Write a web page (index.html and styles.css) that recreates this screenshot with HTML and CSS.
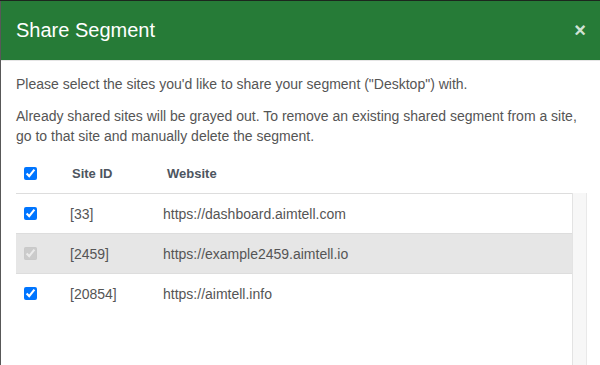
FILE: index.html
```html
<!DOCTYPE html>
<html lang="en">
<head>
  <meta charset="UTF-8" />
  <meta name="viewport" content="width=device-width, initial-scale=1.0"/>
  <title>Share Segment</title>
  <link rel="stylesheet" href="styles.css">
</head>
<body>
  <div class="modal">
    <div class="modal-header">
      <h4>Share Segment</h4>
      <button type="button" class="close">&times;</button>
    </div>
    <div class="modal-body">
      <p>Please select the sites you'd like to share your segment ("Desktop") with.</p>
      <p>Already shared sites will be grayed out. To remove an existing shared segment from a site, go to that site and manually delete the segment.</p>

      <div class="sites">
        <div class="row head">
          <div class="cell check"><input type="checkbox" checked></div>
          <div class="cell id">Site ID</div>
          <div class="cell url">Website</div>
        </div>
        <div class="scroll">
          <div class="list">
            <div class="row">
              <div class="cell check"><input type="checkbox" checked></div>
              <div class="cell id">[33]</div>
              <div class="cell url">https://dashboard.aimtell.com</div>
            </div>
            <div class="row shared">
              <div class="cell check"><input type="checkbox" checked disabled></div>
              <div class="cell id">[2459]</div>
              <div class="cell url">https://example2459.aimtell.io</div>
            </div>
            <div class="row">
              <div class="cell check"><input type="checkbox" checked></div>
              <div class="cell id">[20854]</div>
              <div class="cell url">https://aimtell.info</div>
            </div>
          </div>
          <div class="track"></div>
        </div>
      </div>
    </div>
  </div>
</body>
</html>
```

FILE: styles.css
```css
body {
  margin: 0;
  font-family: 'Liberation Sans', Arial, sans-serif;
  background: #585858;
  border-top: 1px solid #1c261e;
  overflow: hidden;
}

.modal {
  margin-left: 1px;
  background: #fff;
  height: 364px;
  overflow: hidden;
}

.modal-header {
  background: #267b37;
  height: 59px;
  border-bottom: 1px solid #e5e5e5;
  display: flex;
  align-items: center;
  justify-content: space-between;
  padding: 0 14px 0 15px;
}

.modal-header h4 {
  margin: 0;
  color: #fff;
  font-size: 20px;
  font-weight: normal;
}

.close {
  background: none;
  border: none;
  padding: 0;
  color: rgba(255, 255, 255, 0.8);
  font-family: 'Liberation Sans', Arial, sans-serif;
  font-size: 20px;
  font-weight: bold;
  line-height: 1;
  margin-top: -2px;
}

.modal-body {
  padding: 13px 13px 0 15px;
  color: #555;
  font-size: 14px;
}

.modal-body p {
  margin: 0 0 12px;
  line-height: 20px;
}

.modal-body p + p {
  margin-bottom: 7px;
}

.row {
  display: flex;
  align-items: center;
  height: 39px;
  border-top: 1px solid #ddd;
}

.row.head {
  border-top: none;
  height: 40px;
  padding-top: 1px;
  box-sizing: border-box;
  font-weight: bold;
  color: #4d5560;
  font-size: 13px;
}

.row.shared {
  background: #e6e6e6;
  border-bottom: 1px solid #ddd;
}

.row.shared + .row {
  border-top: none;
}

.cell.check {
  width: 54px;
  padding-left: 8px;
  box-sizing: border-box;
}

.cell.check input {
  margin: 0;
  width: 13px;
  height: 13px;
  display: block;
}

.cell.id {
  width: 93px;
}

.row.head .cell.id {
  width: 95px;
  padding-left: 2px;
}

.scroll {
  display: flex;
  height: 200px;
}

.list {
  flex: 1;
}

.track {
  width: 13px;
  background: #f7f7f7;
  border-left: 1px solid #e3e3e3;
  border-right: 1px solid #e9e9e9;
}
```
